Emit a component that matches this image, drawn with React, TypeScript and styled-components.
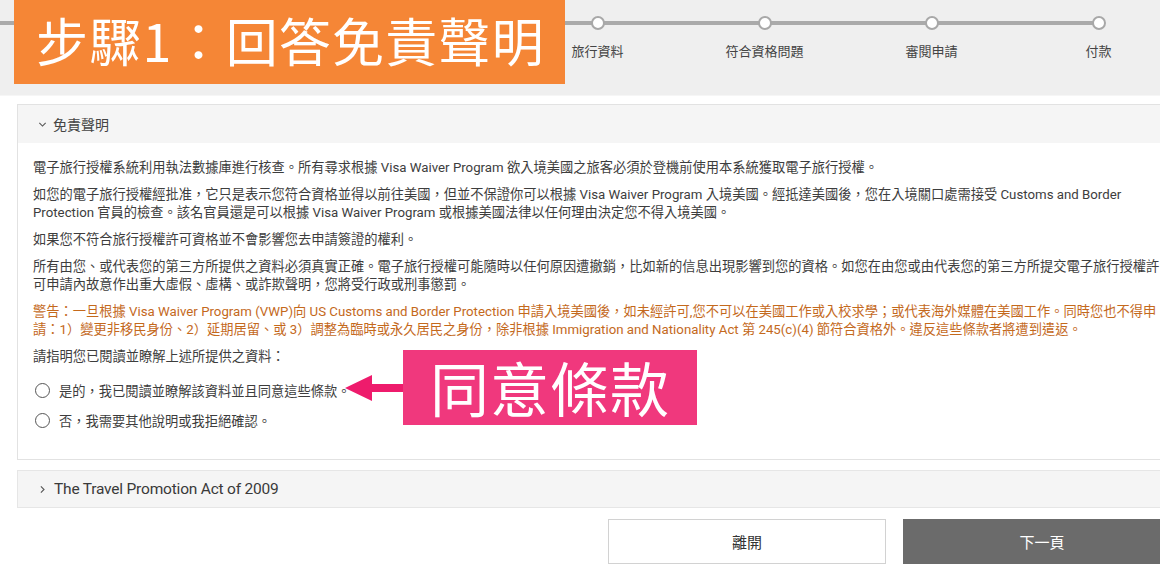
import React from 'react'
import styled, { createGlobalStyle } from 'styled-components'

const GlobalStyle = createGlobalStyle`
  html, body {
    margin: 0;
    padding: 0;
    background: #fff;
    overflow: hidden;
  }
  body {
    font-family: Roboto, "Noto Sans CJK TC", "Noto Sans CJK SC", sans-serif;
    color: #333;
  }
`

const Page = styled.div`
  width: 1160px;
  height: 569px;
  overflow: hidden;
  position: relative;
`

const Header = styled.header`
  position: relative;
  height: 95px;
  background: #efefef;
  border-bottom: 1px solid #f6f6f6;
  overflow: hidden;
`

const Stepper = styled.ol`
  position: relative;
  list-style: none;
  margin: 0;
  padding: 16px 0 0 514px;
  display: grid;
  grid-template-columns: repeat(4, 167px);

  &::before {
    content: '';
    position: absolute;
    left: 0;
    top: 21px;
    width: 1099px;
    height: 4px;
    background: #aaaaaa;
  }
`

const Step = styled.li`
  position: relative;
  display: flex;
  flex-direction: column;
  align-items: center;
`

const Dot = styled.span`
  position: relative;
  z-index: 1;
  box-sizing: border-box;
  width: 14px;
  height: 14px;
  border-radius: 50%;
  border: 2px solid #a8a8a8;
  background: #fff;
`

const StepLabel = styled.span`
  margin-top: 13px;
  font-size: 13px;
  line-height: 18px;
  color: #444;
  white-space: nowrap;
`

const Banner = styled.div`
  position: absolute;
  z-index: 2;
  left: 14px;
  top: 0;
  width: 551px;
  height: 84px;
  background: #f58636;
  display: flex;
  align-items: center;
  padding-left: 22px;
  box-sizing: border-box;
  color: #fff;
  font-family: "Noto Sans CJK TC", sans-serif;
  font-size: 52px;
  letter-spacing: 1.2px;
  line-height: 1;
  padding-bottom: 4px;
`

const Main = styled.main`
  padding: 8px 0 0 17px;
`

const Panel = styled.section`
  width: 1170px;
  border: 1px solid #e2e2e2;
  box-sizing: border-box;
  background: #fff;
`

const PanelHeader = styled.div`
  height: 38px;
  background: #f5f5f5;
  display: flex;
  align-items: center;
  gap: 6px;
  padding-left: 20px;
  font-size: 14px;
  color: #444;
`

const Collapsed = styled(PanelHeader)`
  margin-top: 10px;
  width: 1170px;
  box-sizing: border-box;
  border: 1px solid #e6e6e6;
  padding-left: 20px;
  gap: 7px;
  font-size: 15.5px;
  color: #3a3a3a;
  letter-spacing: -0.2px;
`

const PanelBody = styled.div`
  position: relative;
  padding: 16px 15px 24px;
`

const Para = styled.p<{ warn?: boolean }>`
  margin: 0 0 9px;
  font-size: 13.25px;
  line-height: 18px;
  white-space: nowrap;
  color: ${p => (p.warn ? '#c4691c' : '#3d3d3d')};
`

const RadioRow = styled.label`
  display: flex;
  align-items: center;
  gap: 9px;
  height: 30px;
  font-size: 13.25px;
  color: #3d3d3d;
  padding-left: 2px;
`

const RadioCircle = styled.span`
  box-sizing: border-box;
  width: 15px;
  height: 15px;
  border-radius: 50%;
  border: 1.6px solid #555;
  background: #fff;
`

const Options = styled.div`
  margin-top: 9px;
`

const Callout = styled.div`
  position: absolute;
  left: 327px;
  top: 207px;
  display: flex;
  align-items: center;
`

const CalloutBox = styled.div`
  width: 294px;
  height: 75px;
  background: #f0387d;
  color: #fff;
  font-family: "Noto Sans CJK TC", sans-serif;
  font-size: 59px;
  line-height: 1;
  display: flex;
  align-items: center;
  justify-content: center;
  letter-spacing: 1px;
  padding-bottom: 3px;
  box-sizing: border-box;
`

const Actions = styled.div`
  width: 1170px;
  margin-top: 11px;
  display: flex;
  justify-content: flex-end;
  gap: 17px;
  padding-right: 6px;
  box-sizing: border-box;
`

const Button = styled.button<{ primary?: boolean }>`
  width: 278px;
  height: 45px;
  box-sizing: border-box;
  border: 1px solid ${p => (p.primary ? '#6b6b6b' : '#d2d2d2')};
  background: ${p => (p.primary ? '#6b6b6b' : '#fff')};
  color: ${p => (p.primary ? '#fff' : '#333')};
  font-family: "Noto Sans CJK TC", sans-serif;
  font-size: 15px;
  cursor: pointer;
`

const Chevron = ({ open }: { open?: boolean }) => (
  <svg width="9" height="9" viewBox="0 0 10 10">
    <path
      d={open ? 'M1.5 3.2 L5 6.7 L8.5 3.2' : 'M3.2 1.5 L6.7 5 L3.2 8.5'}
      fill="none"
      stroke="#555"
      strokeWidth="1.2"
    />
  </svg>
)

const Arrow = () => (
  <svg width="58" height="30" viewBox="0 0 58 30">
    <polygon points="0,15 27,2 27,11 58,11 58,19 27,19 27,28" fill="#ee1b6c" />
  </svg>
)

const steps = ['旅行資料', '符合資格問題', '審閱申請', '付款']

export default function App() {
  return (
    <Page>
      <GlobalStyle />
      <Header>
        <Stepper>
          {steps.map(s => (
            <Step key={s}>
              <Dot />
              <StepLabel>{s}</StepLabel>
            </Step>
          ))}
        </Stepper>
        <Banner>步驟1：回答免責聲明</Banner>
      </Header>

      <Main>
        <Panel>
          <PanelHeader>
            <Chevron open />
            免責聲明
          </PanelHeader>
          <PanelBody>
            <Para>電子旅行授權系統利用執法數據庫進行核查。所有尋求根據 Visa Waiver Program 欲入境美國之旅客必須於登機前使用本系統獲取電子旅行授權。</Para>
            <Para>
              如您的電子旅行授權經批准，它只是表示您符合資格並得以前往美國，但並不保證你可以根據 Visa Waiver Program 入境美國。經抵達美國後，您在入境關口處需接受 Customs and Border
              <br />
              Protection 官員的檢查。該名官員還是可以根據 Visa Waiver Program 或根據美國法律以任何理由決定您不得入境美國。
            </Para>
            <Para>如果您不符合旅行授權許可資格並不會影響您去申請簽證的權利。</Para>
            <Para>
              所有由您、或代表您的第三方所提供之資料必須真實正確。電子旅行授權可能隨時以任何原因遭撤銷，比如新的信息出現影響到您的資格。如您在由您或由代表您的第三方所提交電子旅行授權許
              <br />
              可申請內故意作出重大虛假、虛構、或詐欺聲明，您將受行政或刑事懲罰。
            </Para>
            <Para warn>
              警告：一旦根據 Visa Waiver Program (VWP)向 US Customs and Border Protection 申請入境美國後，如未經許可,您不可以在美國工作或入校求學；或代表海外媒體在美國工作。同時您也不得申
              <br />
              請：1）變更非移民身份、2）延期居留、或 3）調整為臨時或永久居民之身份，除非根據 Immigration and Nationality Act 第 245(c)(4) 節符合資格外。違反這些條款者將遭到遣返。
            </Para>
            <Para>請指明您已閱讀並瞭解上述所提供之資料：</Para>
            <Options>
              <RadioRow>
                <RadioCircle />
                是的，我已閱讀並瞭解該資料並且同意這些條款。
              </RadioRow>
              <RadioRow>
                <RadioCircle />
                否，我需要其他說明或我拒絕確認。
              </RadioRow>
            </Options>
            <Callout>
              <Arrow />
              <CalloutBox>同意條款</CalloutBox>
            </Callout>
          </PanelBody>
        </Panel>

        <Collapsed>
          <Chevron />
          The Travel Promotion Act of 2009
        </Collapsed>

        <Actions>
          <Button>離開</Button>
          <Button primary>下一頁</Button>
        </Actions>
      </Main>
    </Page>
  )
}
